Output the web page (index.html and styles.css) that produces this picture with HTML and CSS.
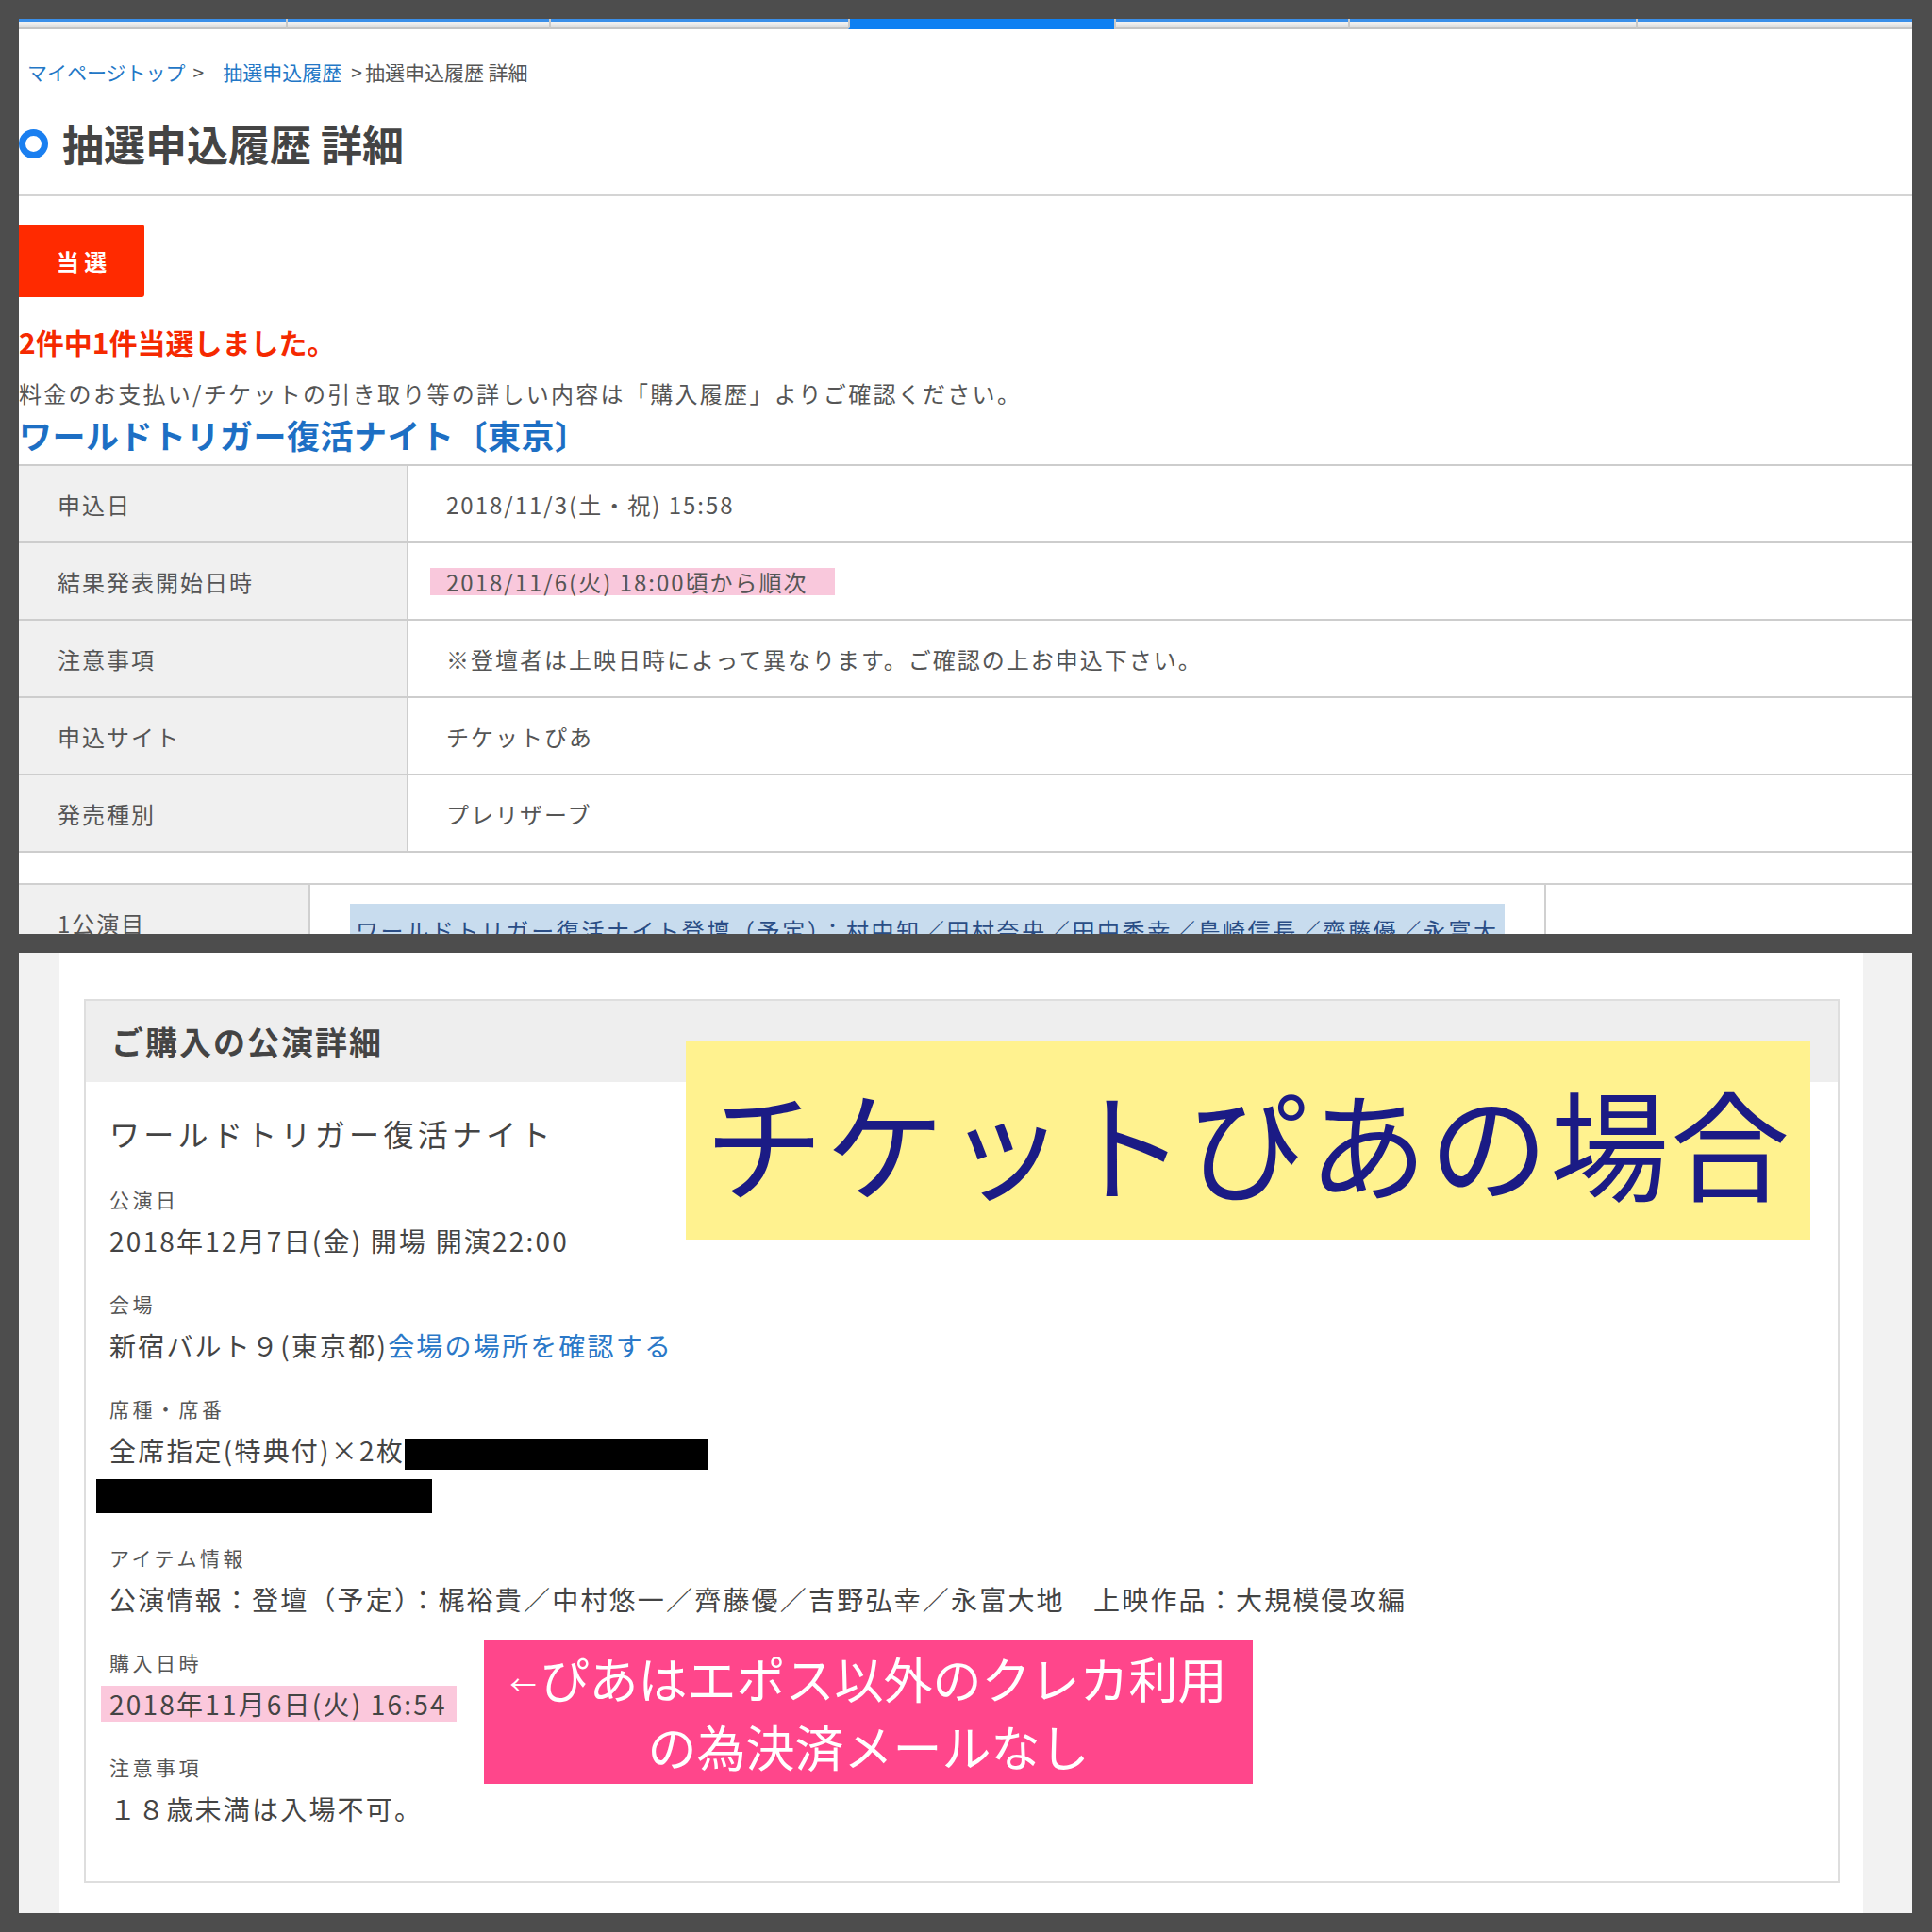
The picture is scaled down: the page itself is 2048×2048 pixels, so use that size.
FILE: index.html
```html
<!DOCTYPE html>
<html lang="ja">
<head>
  <meta charset="UTF-8">
  <title>抽選申込履歴 詳細 / ご購入の公演詳細</title>
  <link rel="stylesheet" href="styles.css">
</head>
<body>
<div class="frame">

  <section class="shot shot-top">
    <div class="tabs">
      <div class="tab"></div>
      <div class="tab"></div>
      <div class="tab"></div>
      <div class="tab active"></div>
      <div class="tab"></div>
      <div class="tab"></div>
      <div class="tab"></div>
    </div>

    <nav class="crumbs">
      <a href="#">マイページトップ</a><span class="sep">&gt;</span><a href="#">抽選申込履歴</a><span class="sep sep-last">&gt;</span>抽選申込履歴 詳細
    </nav>

    <h1 class="page-title"><span class="ring"></span>抽選申込履歴 詳細</h1>
    <hr class="rule">

    <div class="badge">当 選</div>
    <p class="result">2件中1件当選しました。</p>
    <p class="note">料金のお支払い/チケットの引き取り等の詳しい内容は「購入履歴」よりご確認ください。</p>
    <h2 class="event">ワールドトリガー復活ナイト〔東京〕</h2>

    <table class="info">
      <tr><th>申込日</th><td>2018/11/3(土・祝) 15:58</td></tr>
      <tr><th>結果発表開始日時</th><td><span class="mark">2018/11/6(火) 18:00頃から順次</span></td></tr>
      <tr><th>注意事項</th><td>※登壇者は上映日時によって異なります。ご確認の上お申込下さい。</td></tr>
      <tr><th>申込サイト</th><td>チケットぴあ</td></tr>
      <tr><th>発売種別</th><td>プレリザーブ</td></tr>
    </table>

    <table class="perf">
      <tr>
        <th>1公演目</th>
        <td><span class="perf-name">ワールドトリガー復活ナイト登壇（予定）：村中知／田村奈央／田中秀幸／鳥崎信長／齊藤優／永富大</span></td>
        <td class="perf-side"></td>
      </tr>
    </table>
  </section>

  <section class="shot shot-bottom">
    <div class="sheet">
      <div class="card">
        <div class="card-head">ご購入の公演詳細</div>
        <div class="card-body">
          <p class="perf-title">ワールドトリガー復活ナイト</p>

          <div class="item">
            <div class="item-label">公演日</div>
            <div class="item-value">2018年12月7日(金) 開場 開演22:00</div>
          </div>
          <div class="item">
            <div class="item-label">会場</div>
            <div class="item-value">新宿バルト９(東京都)<a href="#">会場の場所を確認する</a></div>
          </div>
          <div class="item">
            <div class="item-label">席種・席番</div>
            <div class="item-value">全席指定(特典付)×2枚<span class="redact"></span></div>
            <div class="redact-line"></div>
          </div>
          <div class="item item-gap">
            <div class="item-label">アイテム情報</div>
            <div class="item-value">公演情報：登壇（予定）：梶裕貴／中村悠一／齊藤優／吉野弘幸／永富大地　上映作品：大規模侵攻編</div>
          </div>
          <div class="item">
            <div class="item-label">購入日時</div>
            <div class="item-value"><span class="hl">2018年11月6日(火) 16:54</span></div>
          </div>
          <div class="item">
            <div class="item-label">注意事項</div>
            <div class="item-value">１８歳未満は入場不可。</div>
          </div>
        </div>
      </div>
    </div>

    <div class="tag tag-yellow">チケットぴあの場合</div>
    <div class="tag tag-pink">
      <span><span class="arrow">←</span>ぴあはエポス以外のクレカ利用</span>
      <span>の為決済メールなし</span>
    </div>
  </section>

</div>
</body>
</html>
```

FILE: styles.css
```css
body {
  margin: 0;
  background: #4d4d4d;
  font-family: "Noto Sans CJK JP", "Noto Sans", sans-serif;
  color: #555;
}
.frame {
  padding: 20px 21px 20px 20px;
  display: flex;
  flex-direction: column;
  gap: 20px;
}
.shot {
  overflow: hidden;
}

/* upper screenshot */
.shot-top {
  height: 970px;
  background: #fff;
}
.tabs {
  display: grid;
  grid-template-columns: 283px 279px 317px 282px 248px 305px 1fr;
  height: 11px;
}
.tab {
  box-sizing: border-box;
  background: linear-gradient(#3b8fe8 0 3px, #f3f3f3 3px, #dedede);
  border-bottom: 2px solid #c4c4c4;
  border-left: 2px solid #c9c9c9;
}
.tab:first-child {
  border-left: none;
}
.tab.active {
  background: #0e80f2;
  border-bottom-color: #0e80f2;
}
.crumbs {
  margin-top: 30px;
  padding-left: 9px;
  line-height: 30px;
  font-size: 21px;
  color: #555;
}
.crumbs a {
  color: #2377c6;
  text-decoration: none;
}
.sep {
  margin: 0 20px 0 8px;
}
.sep-last {
  margin: 0 3px 0 10px;
}
.page-title {
  display: flex;
  align-items: center;
  gap: 15px;
  margin: 31px 0 0;
  line-height: 60px;
  font-size: 44px;
  font-weight: bold;
  color: #444;
}
.ring {
  box-sizing: border-box;
  width: 31px;
  height: 31px;
  border: 7px solid #1a7ff0;
  border-radius: 50%;
}
.rule {
  margin: 24px 0 0;
  border: 0;
  border-top: 2px solid #d4d4d4;
  height: 0;
}
.badge {
  margin-top: 30px;
  width: 133px;
  height: 77px;
  background: #ff2a00;
  color: #fff;
  font-size: 24px;
  font-weight: bold;
  display: flex;
  align-items: center;
  justify-content: center;
  border-radius: 0 3px 3px 0;
}
.result {
  margin: 27px 0 0;
  line-height: 40px;
  font-size: 30px;
  font-weight: bold;
  color: #f52900;
}
.note {
  margin: 13px 0 0;
  line-height: 44px;
  font-size: 24px;
  letter-spacing: 2.3px;
  color: #555;
}
.event {
  margin: 0;
  line-height: 44px;
  font-size: 35px;
  font-weight: bold;
  letter-spacing: 0.5px;
  color: #1d6fc4;
}
.info {
  margin-top: 9px;
  width: 100%;
  border-collapse: separate;
  border-spacing: 0;
  border-top: 2px solid #cdcdcd;
  font-size: 24px;
  letter-spacing: 2px;
}
.info th,
.info td {
  height: 80px;
  border-bottom: 2px solid #cdcdcd;
  text-align: left;
  font-weight: normal;
  padding: 0;
}
.info th {
  width: 370px;
  padding-left: 41px;
  background: #f0f0f0;
  border-right: 2px solid #cdcdcd;
  color: #555;
}
.info td {
  padding-left: 40px;
  color: #555;
}
.mark {
  display: inline-block;
  margin-left: -17px;
  padding: 0 28px 0 17px;
  line-height: 29px;
  background: #f9c8dc;
}
.perf {
  margin-top: 32px;
  width: 100%;
  border-collapse: separate;
  border-spacing: 0;
  border-top: 2px solid #d0d0d0;
  font-size: 24px;
  letter-spacing: 2px;
}
.perf th,
.perf td {
  height: 100px;
  vertical-align: top;
  text-align: left;
  font-weight: normal;
  padding: 0;
}
.perf th {
  width: 266px;
  padding: 23px 0 0 41px;
  line-height: 36px;
  background: #f0f0f0;
  border-right: 2px solid #d0d0d0;
  color: #555;
}
.perf td {
  padding: 20px 0 0 42px;
}
.perf-name {
  display: inline-block;
  padding: 10px 6px;
  line-height: 36px;
  background: #c8dcee;
  color: #2a4d85;
  letter-spacing: 2.6px;
}
.perf .perf-side {
  width: 388px;
  padding: 0;
  border-left: 2px solid #d0d0d0;
}

/* lower screenshot */
.shot-bottom {
  position: relative;
  height: 1018px;
  background: #f2f2f2;
  padding: 0 52px 0 43px;
}
.sheet {
  height: 100%;
  background: #fff;
  padding: 49px 25px 0 26px;
}
.card {
  border: 2px solid #dedede;
}
.card-head {
  height: 86px;
  line-height: 86px;
  padding-left: 27px;
  background: #eeeeee;
  font-size: 34px;
  font-weight: bold;
  letter-spacing: 2px;
  color: #444;
}
.card-body {
  padding: 24px 25px 53px;
}
.perf-title {
  margin: 0;
  line-height: 60px;
  font-size: 32px;
  letter-spacing: 4.3px;
  color: #444;
}
.item {
  margin-top: 23px;
}
.perf-title + .item {
  margin-top: 20px;
}
.item-gap {
  margin-top: 27px;
}
.item-label {
  line-height: 40px;
  font-size: 21px;
  letter-spacing: 3.5px;
  color: #555;
}
.item-value {
  line-height: 48px;
  font-size: 28px;
  letter-spacing: 2.2px;
  color: #444;
}
.item-value a {
  color: #2a78c8;
  text-decoration: none;
}
.redact {
  display: inline-block;
  width: 321px;
  height: 33px;
  background: #000;
  vertical-align: middle;
}
.redact-line {
  margin: 7px 0 0 -14px;
  width: 356px;
  height: 36px;
  background: #000;
}
.hl {
  display: inline-block;
  margin-left: -9px;
  padding: 0 10px 0 9px;
  line-height: 38px;
  background: #fbc8dc;
}

/* annotations laid over the screenshot */
.tag {
  position: absolute;
  display: flex;
  align-items: center;
  justify-content: center;
}
.tag-yellow {
  left: 707px;
  top: 94px;
  width: 1192px;
  height: 210px;
  background: #fff28f;
  color: #1b1b85;
  font-size: 126px;
  letter-spacing: 2px;
}
.tag-pink {
  left: 493px;
  top: 728px;
  width: 815px;
  height: 153px;
  flex-direction: column;
  background: #ff468b;
  color: #fff;
  font-size: 52px;
  line-height: 65px;
}
.arrow {
  font-size: 28px;
  margin-right: 4px;
  vertical-align: 4px;
}
```
